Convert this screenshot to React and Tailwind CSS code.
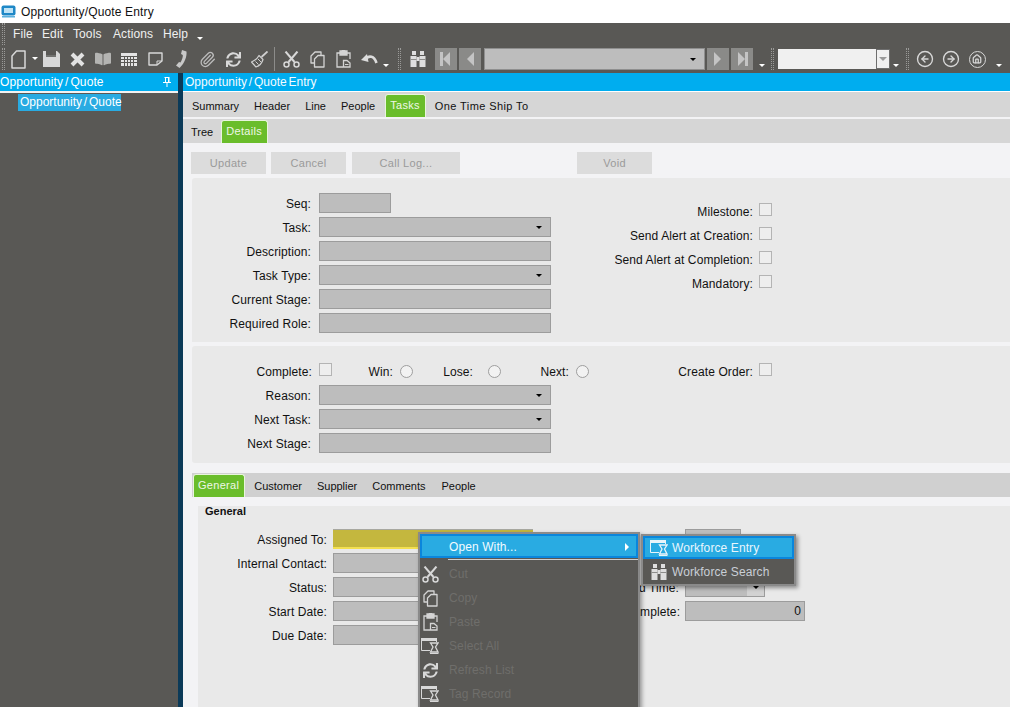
import React from "react";
import { Paperclip, CircleArrowLeft, CircleArrowRight, House } from "lucide-react";
import { FaBookOpen, FaSync } from "react-icons/fa";

const font = { fontFamily: '"Liberation Sans", Arial, sans-serif' };

function Caret() {
  return <span className="block w-0 h-0 border-x-[3px] border-x-transparent border-t-[3px] border-t-black" />;
}

function WhiteCaret({ className = "" }) {
  return <span className={`block w-0 h-0 border-x-[3px] border-x-transparent border-t-[3px] border-t-white ${className}`} />;
}

function Grip({ className = "" }) {
  return <span className={`block w-[3px] h-[22px] border-x border-dotted border-[#9a9a98] ${className}`} />;
}

function Slot({ children, w = 26 }) {
  return <div className="flex items-center justify-center shrink-0 text-[#d8d8d8]" style={{ width: w }}>{children}</div>;
}

function DocIcon() {
  return (
    <svg width="15" height="19" viewBox="0 0 15 19" fill="none" stroke="#d8d8d8" strokeWidth="1.500">
      <path d="M5.500 1H14V18H1V6z" strokeLinejoin="round" />
    </svg>
  );
}

function SaveIcon() {
  return (
    <svg width="17" height="16" viewBox="0 0 17 16">
      <path d="M0 0H14L17 3V16H0z" fill="#d8d8d8" />
      <rect x="3" y="0" width="10" height="6" fill="#595855" />
      <rect x="3" y="4.500" width="10" height="1" fill="#8c8c8a" />
    </svg>
  );
}

function CrossIcon() {
  return (
    <svg width="15" height="15" viewBox="0 0 15 15" stroke="#e2e2e2" strokeWidth="4">
      <path d="M2 2L13 13M13 2L2 13" />
    </svg>
  );
}

function GridIcon() {
  return (
    <svg width="16" height="13" viewBox="0 0 16 13">
      <rect x="0" y="0" width="16" height="13" fill="#e4e4e4" />
      {[3.5, 6.5, 9.5, 12.5].map((x) => <line key={x} x1={x} x2={x} y1="3" y2="13" stroke="#595855" />)}
      {[3.5, 6.5, 9.5].map((y) => <line key={y} x1="0" x2="16" y1={y} y2={y} stroke="#595855" />)}
    </svg>
  );
}

function NoteIcon() {
  return (
    <svg width="15" height="14" viewBox="0 0 15 14" fill="none" stroke="#d8d8d8" strokeWidth="1.400">
      <path d="M1 1H14V9L9 13H1z" strokeLinejoin="round" />
      <path d="M14 9H9V13" strokeWidth="1" />
    </svg>
  );
}

function PhoneIcon() {
  return (
    <svg width="11" height="18" viewBox="0 0 11 18" fill="#c8c8c8">
      <path d="M6 0L10.500 1.500C11 6 9 13 3.500 18L0 15.500L3 12L4.500 12.500C6 10 7 7 6.800 5L5 4z" />
    </svg>
  );
}

function BroomIcon() {
  return (
    <svg width="17" height="17" viewBox="0 0 17 17" fill="none" stroke="#d0d0d0" strokeWidth="1.200">
      <path d="M16.500 0.500L10.500 6" strokeWidth="1.800" />
      <path d="M8 4.500L12 8.500C11 12 8 15 5 16L0.500 11C3 10 6.500 7.500 8 4.500z" strokeLinejoin="round" />
      <path d="M4.500 10.500L7.500 13.500M7 8L10 11" strokeWidth="1" />
    </svg>
  );
}

function ScissorsIcon() {
  return (
    <svg width="17" height="17" viewBox="0 0 17 17" fill="none" stroke="#d8d8d8">
      <path d="M2.500 0.500L11.500 11M14.500 0.500L5.500 11" strokeWidth="2" />
      <circle cx="3.500" cy="13.500" r="2.500" strokeWidth="1.500" />
      <circle cx="13.500" cy="13.500" r="2.500" strokeWidth="1.500" />
    </svg>
  );
}

function CopyIcon() {
  return (
    <svg width="15" height="17" viewBox="0 0 15 17" fill="none" stroke="#d4d4d4" strokeWidth="1.300" strokeLinejoin="round">
      <path d="M4 12H1V5L5 1H11V4" />
      <path d="M8 4.500H14V16H4.500V8z" />
    </svg>
  );
}

function PasteIcon() {
  return (
    <svg width="15" height="18" viewBox="0 0 15 18" fill="none" stroke="#d4d4d4" strokeWidth="1.300">
      <path d="M4 3H1V17H7M11 3H14V9" />
      <path d="M4 3V1H6C6 0 9 0 9 1H11V5H4z" fill="#d4d4d4" />
      <path d="M7.500 10.500H11L14 13V17H7.500z" fill="#595855" />
      <path d="M9 14.500H12.500" strokeWidth="1" />
    </svg>
  );
}

function UndoIcon() {
  return (
    <svg width="17" height="12" viewBox="0 0 17 12" fill="none">
      <path d="M5 5.500C8 2.500 13 2.500 15.500 10" stroke="#dcdcdc" strokeWidth="2.600" />
      <polygon points="0,7 6,1 7.500,9" fill="#dcdcdc" />
    </svg>
  );
}

function BinocularsIcon() {
  return (
    <svg width="16" height="16" viewBox="0 0 16 16" fill="#dedede">
      <rect x="2" y="0" width="4" height="4" />
      <rect x="10" y="0" width="4" height="4" />
      <rect x="0.500" y="5" width="6" height="11" />
      <rect x="9.500" y="5" width="6" height="11" />
      <rect x="6.500" y="6" width="3" height="4" />
      <rect x="0.500" y="8" width="6" height="1" fill="#8c8c8a" />
      <rect x="9.500" y="8" width="6" height="1" fill="#8c8c8a" />
    </svg>
  );
}

function NavButton({ dir, bar }) {
  return (
    <div className="w-[22px] h-[22px] bg-[#8a8a88] flex items-center justify-center shrink-0">
      <svg width="14" height="14" viewBox="0 0 14 14" fill="#c4c4c4">
        {dir === "left" ? <polygon points="11,0 11,14 4,7" /> : <polygon points="3,0 3,14 10,7" />}
        {bar && <rect x={dir === "left" ? 1 : 10} y="0" width="3" height="14" />}
      </svg>
    </div>
  );
}

function HourglassIcon({ color = "#d8d8d8", bg = "#595855" }) {
  return (
    <svg width="18" height="16" viewBox="0 0 18 16" fill="none" stroke={color}>
      <path d="M9 12.500H0.500V0.500H15.500V4" />
      <rect x="0.500" y="0.500" width="15" height="2" fill={color} />
      <path d="M9.500 5H17L14.500 9L17 14H9.500L12 9z" fill={bg} strokeWidth="1.300" />
      <path d="M9 15.500H17.500" strokeWidth="1.200" />
    </svg>
  );
}

function Label({ children, w }) {
  return (
    <span className="block pt-[2px] text-right text-[12px] tracking-[0.1px] text-[#111] shrink-0 whitespace-nowrap" style={{ width: w }}>
      {children}
    </span>
  );
}

function Input({ w = 232, dropdown, className = "", children }) {
  return (
    <div className={`h-5 bg-[#bdbdbd] border border-[#9c9c9c] flex items-center justify-end pr-2 shrink-0 ${className}`} style={{ width: w }}>
      {dropdown && <Caret />}
      {children}
    </div>
  );
}

function Check() {
  return <span className="block w-[13px] h-[13px] mb-[4px] bg-[#eeeeee] border border-[#b4b4b4] shrink-0" />;
}

function Radio() {
  return <span className="block w-[13px] h-[13px] rounded-full bg-[#f2f2f2] border border-[#9e9e9e] shrink-0" />;
}

function FormRow({ label, children }) {
  return (
    <div className="flex items-center gap-2 h-5">
      <Label w={119}>{label}</Label>
      {children}
    </div>
  );
}

function Tab({ children, active, mr = 0 }) {
  if (active) {
    return (
      <div className="h-[23px] self-end pl-[4px] pr-[5px] pb-[1px] bg-[#6abd2b] border border-b-0 border-[#e8f5dc] rounded-t-[3px] text-[#eef7e6] text-[11px] tracking-[0.3px] flex items-center shrink-0" style={{ marginRight: mr }}>
        {children}
      </div>
    );
  }
  return <span className="text-[11px] text-[#111] shrink-0 pt-[3px]" style={{ marginRight: mr }}>{children}</span>;
}

function DisabledButton({ children, w, mr = 6 }) {
  return (
    <div className="h-[22px] bg-[#dcdcdc] text-[#9a9a9a] text-[11px] tracking-[0.3px] flex items-center justify-center shrink-0" style={{ width: w, marginRight: mr }}>
      {children}
    </div>
  );
}

function MenuItem({ icon, children }) {
  return (
    <div className="h-6 flex items-center">
      <div className="w-[20px] mr-[9px] flex items-center justify-center shrink-0 text-[#d8d8d8]">{icon}</div>
      <span className="text-[12px] tracking-[0.1px] text-[#6f6e6b]">{children}</span>
    </div>
  );
}

function FormRowGeneral({ label, input, right }) {
  return (
    <div className="flex items-center h-5">
      <Label w={129}>{label}</Label>
      <span className="w-[6px] shrink-0" />
      {input}
      {right}
    </div>
  );
}

export default function App() {
  return (
    <div className="relative w-[1010px] h-[707px] overflow-hidden bg-white flex flex-col" style={font}>
      {/* Title bar */}
      <div className="h-[23px] flex items-center pl-[1px] gap-[5px] shrink-0">
        <svg width="15" height="13" viewBox="0 0 15 13">
          <rect x="0.500" y="0.500" width="14" height="10" rx="2" fill="#1e88c7" />
          <rect x="3" y="3" width="9" height="5" fill="#bfe3f5" />
          <rect x="1" y="11" width="13" height="1.500" fill="#5bb0dc" />
        </svg>
        <span className="text-[12px] tracking-[0.15px] text-[#111]">Opportunity/Quote Entry</span>
      </div>

      {/* Menu bar */}
      <div className="h-[22px] bg-[#595855] flex items-center shrink-0 pl-[2px]">
        <Grip className="h-[14px]" />
        <div className="flex items-center ml-2 text-[12px] text-[#f0f0f0] tracking-[0.1px]">
          <span className="w-[29px]">File</span>
          <span className="w-[31px]">Edit</span>
          <span className="w-[40px]">Tools</span>
          <span className="w-[50px]">Actions</span>
          <span className="w-[34px]">Help</span>
        </div>
        <WhiteCaret className="mt-[8px]" />
      </div>

      {/* Toolbar */}
      <div className="h-[28px] bg-[#595855] flex items-center shrink-0 pl-[2px]">
        <Grip className="h-[20px]" />
        <Slot><DocIcon /></Slot>
        <WhiteCaret className="ml-[1px] -mt-[2px]" />
        <Slot><SaveIcon /></Slot>
        <Slot><CrossIcon /></Slot>
        <Slot><span className="text-[#b4b4b2]"><FaBookOpen size={16} /></span></Slot>
        <Slot><GridIcon /></Slot>
        <Slot><NoteIcon /></Slot>
        <Slot><PhoneIcon /></Slot>
        <Slot><span className="text-[#bcbcbc]"><Paperclip size={17} strokeWidth={1.800} /></span></Slot>
        <Slot><FaSync size={15} /></Slot>
        <Slot><BroomIcon /></Slot>
        <span className="block w-px h-6 bg-[#8c8c8a] ml-[2px] mr-[3px]" />
        <Slot><ScissorsIcon /></Slot>
        <Slot w={27}><CopyIcon /></Slot>
        <Slot w={25}><PasteIcon /></Slot>
        <Slot><UndoIcon /></Slot>
        <WhiteCaret className="mt-[12px] ml-[1px]" />
        <Grip className="ml-[9px]" />
        <Slot w={34}><BinocularsIcon /></Slot>
        <div className="flex items-center">
          <NavButton dir="left" bar />
          <span className="w-[2px]" />
          <NavButton dir="left" />
          <div className="w-[221px] h-[22px] ml-[3px] mr-[2px] bg-[#bdbdbd] border border-[#8f8f8f] flex items-center justify-end pr-2"><Caret /></div>
          <NavButton dir="right" />
          <span className="w-[2px]" />
          <NavButton dir="right" bar />
        </div>
        <WhiteCaret className="mt-[12px] ml-[6px]" />
        <Grip className="ml-[6px]" />
        <div className="w-[112px] h-[20px] ml-[4px] bg-[#f0f0f0] flex justify-end">
          <div className="w-[14px] h-full border border-[#6e6e6e] flex items-center justify-center">
            <span className="block w-0 h-0 border-x-[4px] border-x-transparent border-t-[4px] border-t-[#9a9a9a]" />
          </div>
        </div>
        <WhiteCaret className="mt-[12px] ml-[3px]" />
        <Grip className="ml-[7px]" />
        <span className="w-[3px]" />
        <Slot w={26}><CircleArrowLeft size={18} strokeWidth={1.800} /></Slot>
        <Slot w={26}><CircleArrowRight size={18} strokeWidth={1.800} /></Slot>
        <Slot w={26}><span className="w-[17px] h-[17px] rounded-full border-[1.5px] border-[#d8d8d8] flex items-center justify-center"><House size={10} strokeWidth={3} /></span></Slot>
        <WhiteCaret className="mt-[12px] ml-[6px]" />
      </div>

      {/* Body */}
      <div className="flex-1 flex min-h-0">
        {/* Left panel */}
        <div className="w-[178px] shrink-0 bg-[#595855] flex flex-col">
          <div className="h-[18px] bg-[#00adef] text-white text-[12px] tracking-[0.1px] [word-spacing:-1.5px] flex items-center justify-between pr-[7px] shrink-0">
            <span>Opportunity / Quote</span>
            <svg width="8" height="10" viewBox="0 0 8 10" fill="#fff">
              <rect x="1.500" y="0" width="5" height="1" />
              <rect x="2" y="1" width="1" height="4" />
              <rect x="5" y="1" width="1.500" height="4" />
              <rect x="0" y="5" width="8" height="1" />
              <rect x="3.500" y="6" width="1" height="4" />
            </svg>
          </div>
          <div className="h-[2px] bg-[#f2f2f2] shrink-0" />
          <div className="pt-[1px] pl-[18px]">
            <span className="block h-[17px] leading-[17px] pl-[2px] w-[103px] bg-[#29abe2] text-white text-[12px] [word-spacing:-1.5px] whitespace-nowrap">Opportunity / Quote</span>
          </div>
        </div>

        {/* Divider */}
        <div className="w-[5px] shrink-0 bg-[#0b3a58]" />

        {/* Main */}
        <div className="flex-1 bg-[#f3f3f5] flex flex-col min-w-0">
          <div className="h-[18px] bg-[#00adef] text-[#f4fbff] text-[12px] [word-spacing:-1.5px] flex items-center pl-[2px] shrink-0">Opportunity / Quote Entry</div>
          <div className="h-[1px] bg-white shrink-0" />
          <div className="h-[25px] bg-[#d6d6d6] flex items-center pl-[9px] shrink-0">
            <Tab mr={15}>Summary</Tab>
            <Tab mr={15}>Header</Tab>
            <Tab mr={15}>Line</Tab>
            <Tab mr={10}>People</Tab>
            <Tab active mr={9}>Tasks</Tab>
            <Tab><span className="tracking-[0.4px]">One Time Ship To</span></Tab>
          </div>
          <div className="h-[2px] bg-[#f3f3f5] shrink-0" />
          <div className="h-[24px] bg-[#d6d6d6] flex items-center pl-[8px] shrink-0">
            <Tab mr={8}>Tree</Tab>
            <Tab active>Details</Tab>
          </div>

          <div className="flex pl-[8px] pt-[9px] shrink-0">
            <DisabledButton w={75} mr={5}>Update</DisabledButton>
            <DisabledButton w={75} mr={6}>Cancel</DisabledButton>
            <DisabledButton w={108} mr={117}>Call Log...</DisabledButton>
            <DisabledButton w={75}>Void</DisabledButton>
          </div>

          {/* Task fields */}
          <div className="ml-[9px] mt-[4px] h-[164px] bg-[#e9e9e9] rounded-tl-[3px] flex pt-[15px] shrink-0">
            <div className="w-[408px] flex flex-col gap-1 shrink-0">
              <FormRow label="Seq:"><Input w={72} /></FormRow>
              <FormRow label="Task:"><Input dropdown /></FormRow>
              <FormRow label="Description:"><Input /></FormRow>
              <FormRow label="Task Type:"><Input dropdown /></FormRow>
              <FormRow label="Current Stage:"><Input /></FormRow>
              <FormRow label="Required Role:"><Input /></FormRow>
            </div>
            <div className="flex flex-col gap-1 pt-[8px]">
              {["Milestone:", "Send Alert at Creation:", "Send Alert at Completion:", "Mandatory:"].map((t) => (
                <div key={t} className="h-5 flex items-center gap-[6px]">
                  <Label w={153}>{t}</Label>
                  <Check />
                </div>
              ))}
            </div>
          </div>

          {/* Completion fields */}
          <div className="ml-[9px] mt-[4px] h-[117px] bg-[#e9e9e9] rounded-l-[3px] flex pt-[15px] shrink-0">
            <div className="w-[408px] flex flex-col gap-1 shrink-0">
              <div className="flex items-center h-5">
                <Label w={120}>Complete:</Label>
                <span className="w-[7px]" />
                <Check />
                <Label w={61}>Win:</Label>
                <span className="w-[7px]" />
                <Radio />
                <Label w={60}>Lose:</Label>
                <span className="w-[15px]" />
                <Radio />
                <Label w={68}>Next:</Label>
                <span className="w-[7px]" />
                <Radio />
              </div>
              <FormRow label="Reason:"><Input dropdown /></FormRow>
              <FormRow label="Next Task:"><Input dropdown /></FormRow>
              <FormRow label="Next Stage:"><Input /></FormRow>
            </div>
            <div className="h-5 flex items-center gap-[6px]">
              <Label w={153}>Create Order:</Label>
              <Check />
            </div>
          </div>

          {/* Lower tabs */}
          <div className="ml-[9px] mt-[10px] h-[24px] bg-[#d0d0d0] flex items-center pl-[1px] shrink-0">
            <Tab active mr={9}>General</Tab>
            <Tab mr={15}>Customer</Tab>
            <Tab mr={15}>Supplier</Tab>
            <Tab mr={16}>Comments</Tab>
            <Tab>People</Tab>
          </div>

          <div className="flex-1 ml-[15px] mt-[9px] bg-[#e9e9e9] min-h-0">
            <div className="pl-[7px] text-[11px] font-bold text-[#111] leading-[10px]">General</div>
            <div className="mt-[13px] flex flex-col gap-1">
              <FormRowGeneral
                label="Assigned To:"
                input={<div className="w-[200px] h-5 bg-[#c4b73e] border-t border-t-[#a8a8a0] border-b-2 border-b-[#f3e04f] shrink-0" />}
                right={<Input w={56} className="ml-[152px]" />}
              />
              <FormRowGeneral label="Internal Contact:" input={<Input w={200} />} />
              <FormRowGeneral
                label="Status:"
                input={<Input w={200} />}
                right={
                  <div className="flex items-center ml-[66px] gap-[6px]">
                    <Label w={80}>Planned Time:</Label>
                    <div className="w-[80px] h-5 bg-[#bdbdbd] border border-[#9c9c9c] flex justify-end"><div className="w-[17px] h-full bg-[#d2d2d2] flex items-center justify-center"><Caret /></div></div>
                  </div>
                }
              />
              <FormRowGeneral
                label="Start Date:"
                input={<Input w={200} />}
                right={
                  <div className="flex items-center ml-[46px] gap-[6px]">
                    <Label w={100}>Percent Complete:</Label>
                    <Input w={120} className="!pr-[3px]"><span className="text-[12px] text-[#111]">0</span></Input>
                  </div>
                }
              />
              <FormRowGeneral label="Due Date:" input={<Input w={200} />} />
            </div>
          </div>
        </div>
      </div>

      {/* Context menu */}
      <div className="absolute left-[418px] top-[532px] w-[222px] h-[190px] bg-[#595855] border-2 border-[#8a8a8a] shadow-[2px_2px_4px_rgba(0,0,0,0.35)]">
        <div className="h-[24px] bg-[#29abe2] border-2 border-[#0a86dc] flex items-center pl-[27px] pr-[7px] pt-[1px] justify-between text-[12px] tracking-[0.1px] text-[#f2fbff]">
          <span>Open With...</span>
          <span className="block w-0 h-0 border-y-[4px] border-y-transparent border-l-[4px] border-l-white" />
        </div>
        <div className="h-[1px] mt-[1px] ml-[28px] bg-[#cfcfcf]" />
        <div className="mt-[2px]">
          <MenuItem icon={<ScissorsIcon />}>Cut</MenuItem>
          <MenuItem icon={<CopyIcon />}>Copy</MenuItem>
          <MenuItem icon={<PasteIcon />}>Paste</MenuItem>
          <MenuItem icon={<HourglassIcon />}>Select All</MenuItem>
          <MenuItem icon={<FaSync size={15} />}>Refresh List</MenuItem>
          <MenuItem icon={<HourglassIcon />}>Tag Record</MenuItem>
        </div>
        <div className="h-[1px] mt-[1px] ml-[28px] bg-[#cfcfcf]" />
      </div>

      {/* Submenu */}
      <div className="absolute left-[641px] top-[534px] w-[155px] h-[52px] bg-[#595855] border-2 border-[#8a8a8a] shadow-[2px_2px_4px_rgba(0,0,0,0.4)] text-[12px] tracking-[0.1px]">
        <div className="h-[23px] bg-[#29abe2] border-2 border-[#0a86dc] flex items-center pt-[1px] text-[#e8f6fd]">
          <span className="w-[27px] flex justify-center shrink-0"><HourglassIcon color="#e8f4fa" bg="#29abe2" /></span>
          <span>Workforce Entry</span>
        </div>
        <div className="h-[25px] flex items-center pl-[2px] text-[#c9cfd6]">
          <span className="w-[27px] flex justify-center shrink-0"><BinocularsIcon /></span>
          <span>Workforce Search</span>
        </div>
      </div>
    </div>
  );
}
